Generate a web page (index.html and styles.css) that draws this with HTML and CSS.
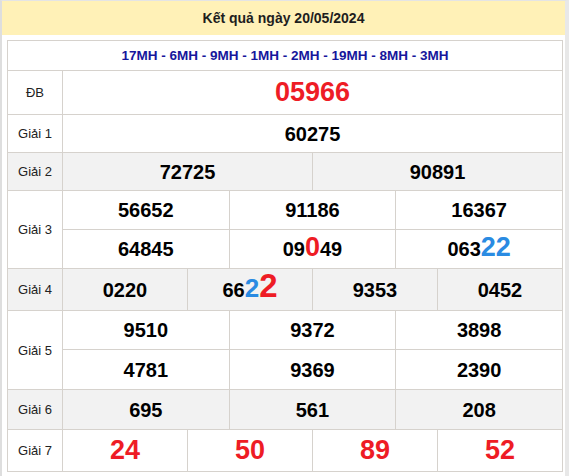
FILE: index.html
```html
<!DOCTYPE html>
<html lang="vi">
<head>
<meta charset="utf-8">
<title>Kết quả ngày 20/05/2024</title>
<link rel="stylesheet" href="styles.css">
</head>
<body>
<div class="frame">
  <div class="title">Kết quả ngày 20/05/2024</div>
  <div class="panel">
    <table class="kq">
      <colgroup><col class="c-label"><col span="12"></colgroup>
      <tr class="r-st"><td colspan="13" class="stations">17MH - 6MH - 9MH - 1MH - 2MH - 19MH - 8MH - 3MH</td></tr>
      <tr class="r-db"><td class="lbl">ĐB</td><td colspan="12" class="num db">05966</td></tr>
      <tr class="r-38"><td class="lbl">Giải 1</td><td colspan="12" class="num">60275</td></tr>
      <tr class="r-38 alt"><td class="lbl">Giải 2</td><td colspan="6" class="num">72725</td><td colspan="6" class="num">90891</td></tr>
      <tr class="r-39"><td rowspan="2" class="lbl">Giải 3</td><td colspan="4" class="num">56652</td><td colspan="4" class="num">91186</td><td colspan="4" class="num">16367</td></tr>
      <tr class="r-39"><td colspan="4" class="num">64845</td><td colspan="4" class="num">09<span class="big red">0</span>49</td><td colspan="4" class="num">063<span class="big blue">22</span></td></tr>
      <tr class="r-42 alt"><td class="lbl">Giải 4</td><td colspan="3" class="num">0220</td><td colspan="3" class="num">66<span class="mid blue">2</span><span class="huge red">2</span></td><td colspan="3" class="num">9353</td><td colspan="3" class="num">0452</td></tr>
      <tr class="r-39"><td rowspan="2" class="lbl">Giải 5</td><td colspan="4" class="num">9510</td><td colspan="4" class="num">9372</td><td colspan="4" class="num">3898</td></tr>
      <tr class="r-40"><td colspan="4" class="num">4781</td><td colspan="4" class="num">9369</td><td colspan="4" class="num">2390</td></tr>
      <tr class="r-40 alt"><td class="lbl">Giải 6</td><td colspan="4" class="num">695</td><td colspan="4" class="num">561</td><td colspan="4" class="num">208</td></tr>
      <tr class="r-42"><td class="lbl">Giải 7</td><td colspan="3" class="num g7">24</td><td colspan="3" class="num g7">50</td><td colspan="3" class="num g7">89</td><td colspan="3" class="num g7">52</td></tr>
    </table>
  </div>
</div>
</body>
</html>
```

FILE: styles.css
```css
* { box-sizing: border-box; }
html, body { margin: 0; padding: 0; background: #fff; }
body { font-family: "Liberation Sans", Arial, sans-serif; color: #222; }

.frame {
  width: 569px;
  height: 476px;
  border-top: 1px solid #e4e4e4;
  border-left: 2px solid #dedede;
  border-right: 4px solid #e8e8e8;
  background: #fff;
}

.title {
  height: 34px;
  background: #fff1b7;
  font-weight: bold;
  font-size: 14px;
  color: #1e1e1e;
  display: flex;
  align-items: center;
  justify-content: center;
}

.panel {
  padding: 5px 0 0 5px;
}

.kq {
  width: 556px;
  table-layout: fixed;
  border-collapse: collapse;
}
.c-label { width: 55px; }

.kq td {
  border: 1px solid #d6d2cd;
  padding: 0;
  text-align: center;
  vertical-align: middle;
  line-height: 1;
}

.r-st { height: 30px; }
.r-db { height: 44px; }
.r-38 { height: 38px; }
.r-39 { height: 39px; }
.r-40 { height: 40px; }
.r-42 { height: 42px; }

.alt td { background: #f2f2f2; }

.stations {
  font-weight: bold;
  font-size: 13.5px;
  color: #16169c;
}

.lbl {
  font-size: 13px;
  color: #222;
}

.num {
  font-weight: bold;
  font-size: 20px;
  color: #000;
}

.db { font-size: 27px; color: #ee1c25; }
.g7 { font-size: 27px; color: #ee1c25; }

.big, .mid, .huge { line-height: 0; }
.big { font-size: 27px; }
.mid { font-size: 26px; }
.huge { font-size: 33px; }
.red { color: #ee1c25; }
.blue { color: #2a8be2; }
```
